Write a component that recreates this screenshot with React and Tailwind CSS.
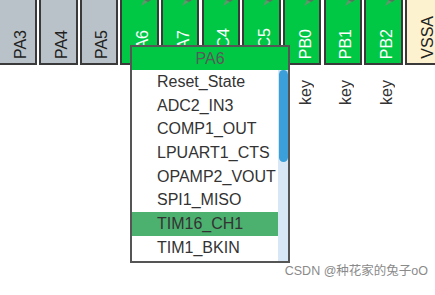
import React from 'react';

const FONT = { fontFamily: '"Liberation Sans", Arial, "Noto Sans CJK SC", sans-serif' };

const PINS = [
  { name: 'PA3', kind: 'gray' },
  { name: 'PA4', kind: 'gray' },
  { name: 'PA5', kind: 'gray' },
  { name: 'PA6', kind: 'green' },
  { name: 'PA7', kind: 'green' },
  { name: 'PC4', kind: 'green' },
  { name: 'PC5', kind: 'green' },
  { name: 'PB0', kind: 'green', label: 'key' },
  { name: 'PB1', kind: 'green', label: 'key' },
  { name: 'PB2', kind: 'green', label: 'key' },
  { name: 'VSSA', kind: 'power' },
];

const SIGNALS = [
  'Reset_State',
  'ADC2_IN3',
  'COMP1_OUT',
  'LPUART1_CTS',
  'OPAMP2_VOUT',
  'SPI1_MISO',
  'TIM16_CH1',
  'TIM1_BKIN',
];

const PIN_BG = {
  gray: 'bg-[#b9c2c9] text-[#222]',
  green: 'bg-[#00c845] text-white',
  power: 'bg-[#fdf2cf] text-[#222]',
};

function Pushpin() {
  return (
    <svg width="11" height="6" viewBox="0 0 11 6" className="absolute top-0 left-[18px]">
      <polygon points="1,6 11,0 4,0" fill="#6e8f72" opacity="0.85" />
      <polygon points="4,0 11,0 8,2" fill="#4d6b52" opacity="0.7" />
    </svg>
  );
}

function Pin({ pin }) {
  return (
    <div className="flex flex-col w-[38.5px] shrink-0">
      <div
        className={`relative h-[65px] border-2 border-t-0 border-[#3a3a3a] flex flex-col justify-end items-center pb-[4px] pl-[7px] ${PIN_BG[pin.kind]}`}
      >
        {pin.kind === 'green' && <Pushpin />}
        <span className="[writing-mode:vertical-rl] rotate-180 text-[16px] leading-[18px]">
          {pin.name}
        </span>
      </div>
      {pin.label && (
        <div className="flex justify-center pl-[7px] mt-[15px]">
          <span className="[writing-mode:vertical-rl] rotate-180 text-[16px] leading-[18px] text-[#333]">
            {pin.label}
          </span>
        </div>
      )}
    </div>
  );
}

function SignalMenu() {
  return (
    <div className="absolute left-[130px] top-[45px] w-[160px] h-[218px] border-2 border-[#555] bg-white flex flex-col">
      <div className="h-[23px] bg-[#00c845] text-[#595959] text-[16px] flex items-center justify-center">
        PA6
      </div>
      <div className="flex-1 flex">
        <div className="flex-1 flex flex-col">
          {SIGNALS.map((s) => (
            <div
              key={s}
              className={`h-[23.7px] shrink-0 flex items-center pl-[25px] text-[16px] text-[#333] ${
                s === 'TIM16_CH1' ? 'bg-[#4cb06f]' : ''
              }`}
            >
              {s}
            </div>
          ))}
        </div>
        <div className="w-[10px] bg-[#d8e7f5] flex justify-center">
          <div className="w-[9px] h-[92px] rounded-full bg-[#3b9fd9]" />
        </div>
      </div>
    </div>
  );
}

export default function App() {
  return (
    <div className="relative w-[435px] h-[295px] bg-white overflow-hidden" style={FONT}>
      <div className="flex gap-[2.17px] ml-[-1.67px]">
        {PINS.map((p) => (
          <Pin key={p.name} pin={p} />
        ))}
      </div>
      <SignalMenu />
      <div className="absolute right-[7px] top-[262px] text-[12.5px] text-[#8a8a8a] whitespace-nowrap">
        CSDN @种花家的兔子oO
      </div>
    </div>
  );
}
